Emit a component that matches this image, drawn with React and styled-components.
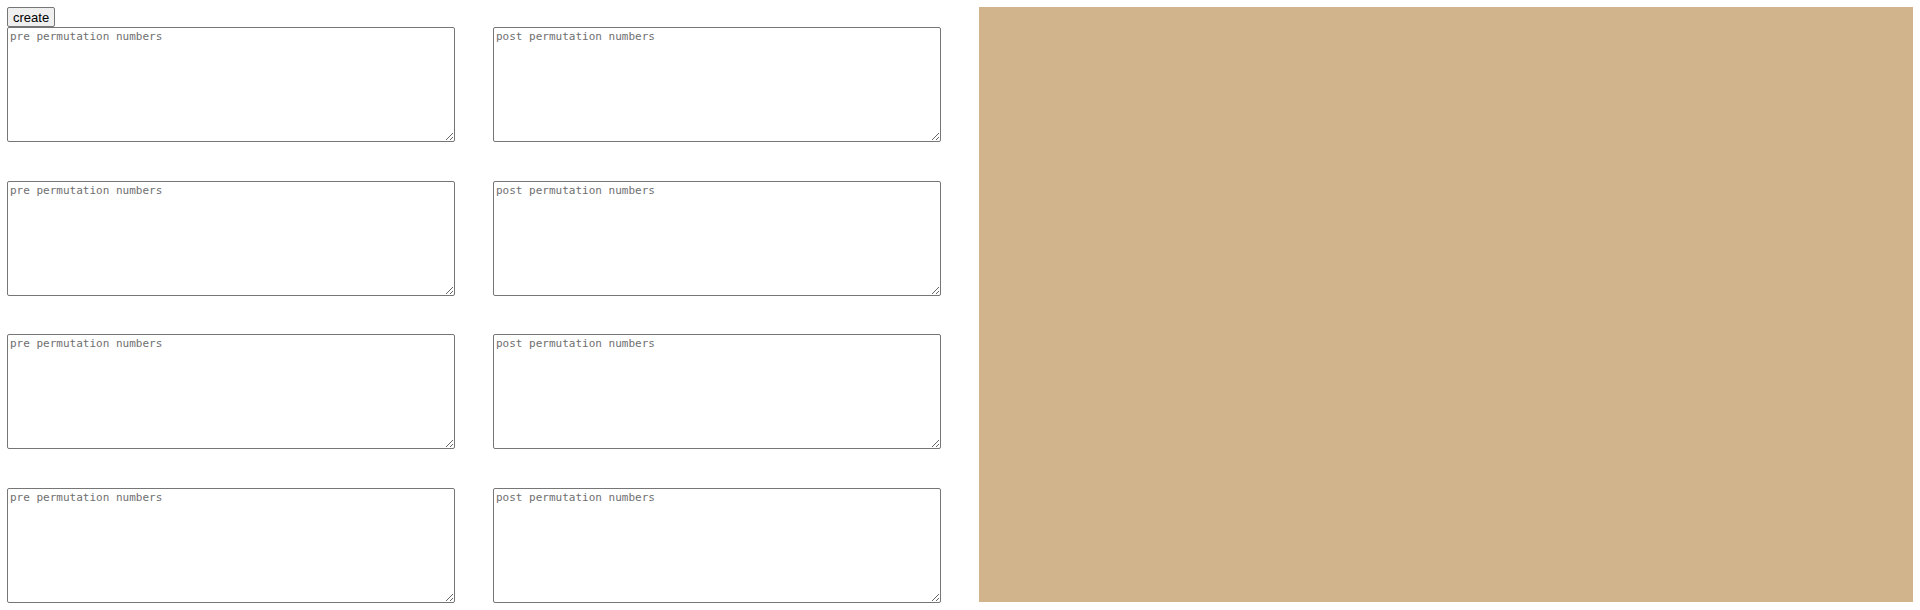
import React from 'react'
import styled, { createGlobalStyle } from 'styled-components'

const GlobalStyle = createGlobalStyle`
    html, body {
        margin: 0;
        padding: 0;
        background: #fff;
    }
`

const Page = styled.div`
    display: flex;
    align-items: flex-start;
    gap: 39px;
    padding: 7px;
    width: 1920px;
    height: 610px;
    box-sizing: border-box;
`

const Controls = styled.div`
    display: flex;
    flex-direction: column;
    width: 933px;
`

const CreateButton = styled.button`
    align-self: flex-start;
    height: 20px;
    padding: 0 5px;
    margin: 0;
    font-family: "Liberation Sans", Arial, sans-serif;
    font-size: 13px;
    color: #000;
    background: #efefef;
    border: 1px solid #767676;
    border-radius: 2px;
    cursor: pointer;
`

const Pairs = styled.div`
    display: grid;
    grid-template-columns: 448px 448px;
    grid-auto-rows: 115px;
    column-gap: 38px;
    row-gap: 38.5px;
`

const Numbers = styled.textarea`
    box-sizing: border-box;
    width: 100%;
    height: 100%;
    margin: 0;
    padding: 2px 2px;
    font-family: "DejaVu Sans Mono", monospace;
    font-size: 11px;
    line-height: 14px;
    border: 1px solid #767676;
    border-radius: 2px;
    resize: both;

    &::placeholder {
        color: #6f6f6f;
    }
`

const Board = styled.div`
    width: 934px;
    height: 595px;
    background-color: #d2b48c;
`

const rows = [0, 1, 2, 3]

const App = () => {
    return (
        <>
            <GlobalStyle />
            <Page>
                <Controls>
                    <CreateButton>create</CreateButton>
                    <Pairs>
                        {rows.map((i) => (
                            <React.Fragment key={i}>
                                <Numbers placeholder="pre permutation numbers" />
                                <Numbers placeholder="post permutation numbers" />
                            </React.Fragment>
                        ))}
                    </Pairs>
                </Controls>
                <Board />
            </Page>
        </>
    )
}

export default App
